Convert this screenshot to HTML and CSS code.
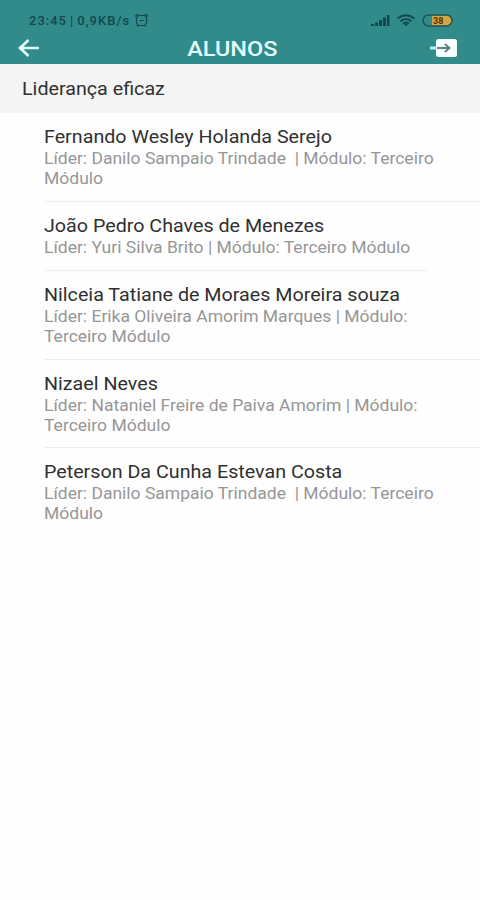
FILE: index.html
```html
<!DOCTYPE html>
<html lang="pt-BR">
<head>
    <meta charset="UTF-8">
    <meta name="viewport" content="width=device-width, initial-scale=1.0">
    <title>Alunos</title>
    <link rel="stylesheet" href="styles.css">
</head>
<body>
    <header class="header">
        <div class="status-bar">
            <span class="status-text">23:45 | 0,9KB/s</span>
            <svg class="alarm" width="15" height="14" viewBox="0 0 15 14">
                <path d="M4.500 2.500h6L12.500 5v5l-2 2.500h-6L2.500 10V5z"/>
                <path d="M1 3.500 4 1M14 3.500 11 1M5.500 7.500h4M4 12l-1 1.500M11 12l1 1.500"/>
            </svg>
            <svg class="signal" width="19" height="12" viewBox="0 0 19 12">
                <path d="M0 10h3v2H0zM4 8.500h3V12H4zM8 6h3v6H8zM12 3.500h3V12h-3zM16 1h2.500v11H16z"/>
            </svg>
            <svg class="wifi" width="20" height="13" viewBox="0 0 20 13">
                <path d="M1.500 4.500Q10-2 18.500 4.500M4.500 7.200Q10 3 15.500 7.200M7 9.700Q10 7.500 13 9.700"/>
                <path class="dot" d="M8 10h4l-2 2.500z"/>
            </svg>
            <svg class="battery" width="32" height="13" viewBox="0 0 32 13">
                <path class="charge" d="M10 1.500h15a5 5 0 0 1 0 10H10z"/>
                <rect class="shell" x="1" y="1" width="29" height="11" rx="5.500"/>
                <text x="11" y="10">38</text>
            </svg>
        </div>
        <div class="toolbar">
            <svg class="back" width="24" height="20" viewBox="0 0 24 20">
                <path d="M22 10H3M11.500 2 3 10l8.500 8"/>
            </svg>
            <h1>ALUNOS</h1>
            <svg class="exit" width="28" height="20" viewBox="0 0 28 20">
                <rect x="6" y="1" width="21" height="18" rx="2.500"/>
                <path class="tail" d="M0 10h6"/>
                <path class="arrow" d="M7 10h12M15 6l4.500 4-4.500 4"/>
            </svg>
        </div>
    </header>

    <h2 class="section-title"><span>Liderança eficaz</span></h2>

    <ul class="students">
        <li class="student">
            <h3>Fernando Wesley Holanda Serejo</h3>
            <p>Líder: Danilo Sampaio Trindade&nbsp; | Módulo: Terceiro<br>Módulo</p>
        </li>
        <li class="student short-line">
            <h3>João Pedro Chaves de Menezes</h3>
            <p>Líder: Yuri Silva Brito | Módulo: Terceiro Módulo</p>
        </li>
        <li class="student">
            <h3>Nilceia Tatiane de Moraes Moreira souza</h3>
            <p>Líder: Erika Oliveira Amorim Marques | Módulo:<br>Terceiro Módulo</p>
        </li>
        <li class="student">
            <h3>Nizael Neves</h3>
            <p>Líder: Nataniel Freire de Paiva Amorim | Módulo:<br>Terceiro Módulo</p>
        </li>
        <li class="student">
            <h3>Peterson Da Cunha Estevan Costa</h3>
            <p>Líder: Danilo Sampaio Trindade&nbsp; | Módulo: Terceiro<br>Módulo</p>
        </li>
    </ul>
</body>
</html>
```
FILE: styles.css
```css
:root {
    --primary-color: #318b8b;
    --status-color: #12484c;
    --section-background: #f4f4f4;
    --text-color: #303030;
    --muted-color: #969696;
    --border-color: #eeeeee;
    --text-stretch: scaleX(1.094);
}

* {
    box-sizing: border-box;
    margin: 0;
    padding: 0;
}

body {
    font-family: Roboto, sans-serif;
    background-color: #fefefe;
    color: var(--text-color);
    min-height: 100vh;
}

svg {
    display: block;
    fill: none;
}

.header {
    height: 64px;
    background-color: var(--primary-color);
    padding-top: 10px;
}

.status-bar {
    display: flex;
    align-items: center;
    height: 20px;
    padding: 0 26px 0 29px;
    color: var(--status-color);
}

.status-text {
    width: 101px;
    font-size: 13px;
    font-weight: 500;
    letter-spacing: 1px;
    word-spacing: -1.2px;
    white-space: nowrap;
}

.alarm {
    margin-left: 4px;
    stroke: var(--status-color);
    stroke-width: 1.2;
}

.signal {
    margin-left: auto;
    fill: var(--status-color);
}

.wifi {
    margin: 0 6px;
    stroke: var(--status-color);
    stroke-width: 1.8;
}

.wifi .dot {
    fill: var(--status-color);
    stroke: none;
}

.battery .charge {
    fill: #d5a548;
}

.battery .shell {
    stroke: #235452;
    stroke-width: 1.5;
}

.battery text {
    fill: #51370f;
    font-size: 9px;
    font-weight: 700;
}

.toolbar {
    display: flex;
    align-items: center;
    justify-content: space-between;
    height: 36px;
    padding: 0 22px 0 17px;
}

.back {
    stroke: #e2ffff;
    stroke-width: 2.6;
}

.toolbar h1 {
    margin-right: 6px;
    padding-top: 2px;
    color: #e2ffff;
    font-size: 21px;
    font-weight: 500;
    line-height: 36px;
    transform: scaleX(1.12);
}

.exit rect {
    fill: #f5ffff;
}

.exit .tail {
    stroke: #a9f2f2;
    stroke-width: 3;
}

.exit .arrow {
    stroke: #677e7e;
    stroke-width: 1.8;
}

.section-title {
    height: 49px;
    padding-left: 22px;
    background-color: var(--section-background);
    font-size: 18px;
    font-weight: 400;
    line-height: 49px;
}

.section-title span {
    display: inline-block;
    transform: var(--text-stretch);
    transform-origin: left;
}

.students {
    list-style: none;
    padding-left: 44px;
}

.student {
    padding: 12px 0 11.85px;
    border-bottom: 1px solid var(--border-color);
    white-space: nowrap;
}

.student h3,
.student p {
    width: fit-content;
    transform: var(--text-stretch);
    transform-origin: left;
}

.student h3 {
    font-size: 18px;
    font-weight: 400;
    line-height: 24px;
}

.student p {
    color: var(--muted-color);
    font-size: 16px;
    line-height: 20px;
}

.student.short-line {
    margin-right: 53px;
}

.student:last-child {
    border-bottom-color: #fafafa;
}
```
